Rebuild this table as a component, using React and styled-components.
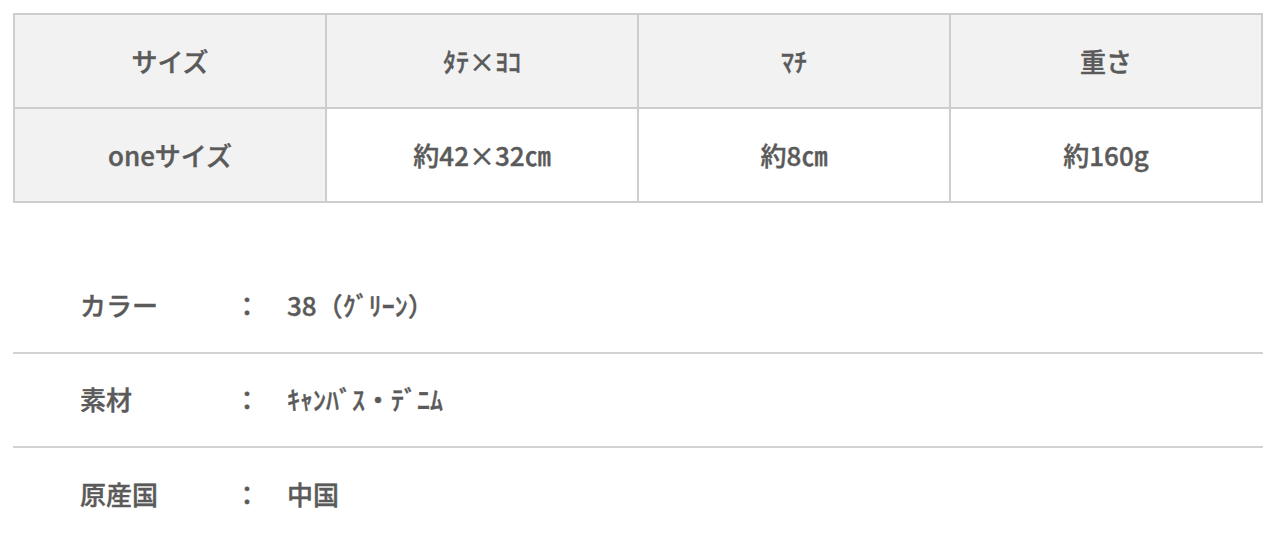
import React from "react";
import styled, { createGlobalStyle } from "styled-components";

const GlobalStyle = createGlobalStyle`
    html, body {
        margin: 0;
        padding: 0;
        background: #ffffff;
    }
    body {
        font-family: "Noto Sans CJK JP", "Noto Sans", sans-serif;
        color: #595959;
    }
`;

const Page = styled.div`
    padding: 13px 17px 0 13px;
    width: 1250px;
`;

const SizeTable = styled.table`
    width: 1250px;
    border-collapse: collapse;
    table-layout: fixed;
    border: 2px solid #cdcdcd;
`;

const Cell = styled.td`
    height: 92px;
    padding: 0;
    text-align: center;
    vertical-align: middle;
    line-height: 1.3;
    font-size: 26px;
    font-weight: 500;
    -webkit-text-stroke: 0.4px #5a5a5a;
    color: #5a5a5a;
    border: 2px solid #cdcdcd;
    background: ${(p) => (p.$shaded ? "#f2f2f2" : "#ffffff")};
`;

const SpecList = styled.div`
    margin-top: 57px;
    display: flex;
    flex-direction: column;
`;

const SpecRow = styled.div`
    box-sizing: border-box;
    display: grid;
    grid-template-columns: 154px 53px 1fr;
    align-items: center;
    height: 94px;
    padding: 0 0 3px 67px;
    font-size: 26px;
    font-weight: 500;
    -webkit-text-stroke: 0.4px #5a5a5a;
    color: #5a5a5a;
    border-bottom: ${(p) => (p.$last ? "none" : "2px solid #d2d2d2")};
`;

const Label = styled.span``;

const Colon = styled.span``;

const Value = styled.span``;

const headers = ["サイズ", "ﾀﾃ×ﾖｺ", "ﾏﾁ", "重さ"];
const values = ["oneサイズ", "約42×32㎝", "約8㎝", "約160g"];

const specs = [
    { label: "カラー", value: "38（ｸﾞﾘｰﾝ）" },
    { label: "素材", value: "ｷｬﾝﾊﾞｽ・ﾃﾞﾆﾑ" },
    { label: "原産国", value: "中国" },
];

export default function App() {
    return (
        <>
            <GlobalStyle />
            <Page>
                <SizeTable>
                    <tbody>
                        <tr>
                            {headers.map((h) => (
                                <Cell key={h} $shaded>{h}</Cell>
                            ))}
                        </tr>
                        <tr>
                            {values.map((v, i) => (
                                <Cell key={v} $shaded={i === 0}>{v}</Cell>
                            ))}
                        </tr>
                    </tbody>
                </SizeTable>
                <SpecList>
                    {specs.map((s, i) => (
                        <SpecRow key={s.label} $last={i === specs.length - 1}>
                            <Label>{s.label}</Label>
                            <Colon>：</Colon>
                            <Value>{s.value}</Value>
                        </SpecRow>
                    ))}
                </SpecList>
            </Page>
        </>
    );
}
